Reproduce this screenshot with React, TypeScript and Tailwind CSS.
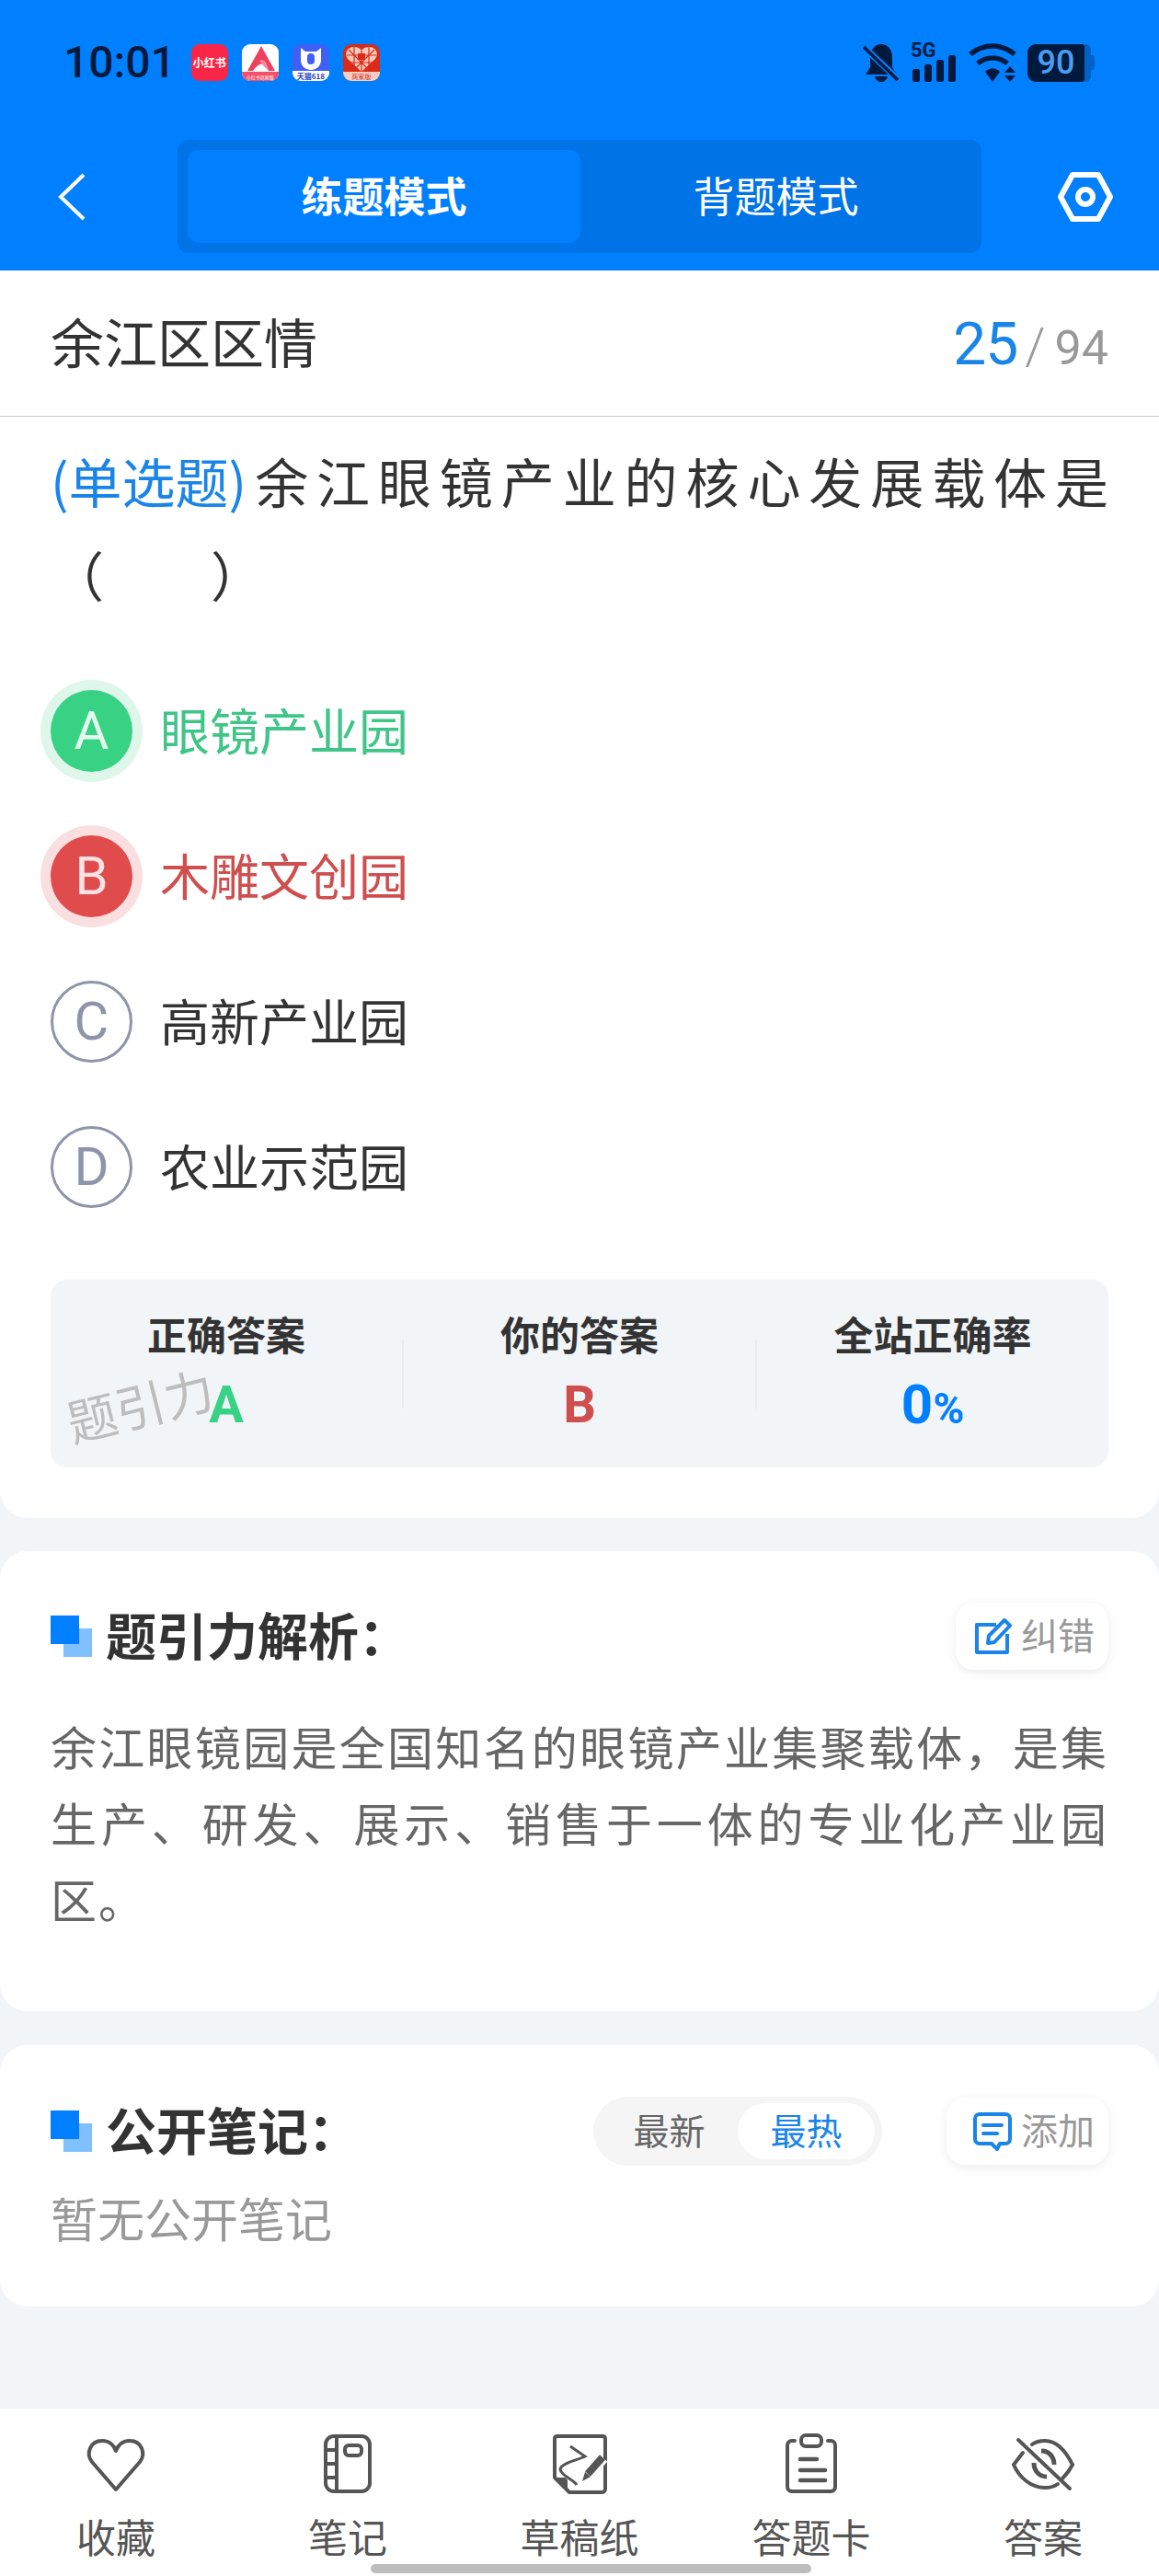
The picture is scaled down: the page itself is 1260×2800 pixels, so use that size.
import type { ReactNode } from "react";

const cjk = "font-['Noto_Sans_CJK_SC','Noto_Sans',sans-serif]";

function AppIcons() {
  return (
    <div className="ml-[17px] flex gap-[15px]">
      <div className="flex h-[40px] w-[40px] items-center justify-center rounded-[9px] bg-[#fb2647] text-[12px] font-bold text-white">
        小红书
      </div>
      <div className="flex h-[40px] w-[40px] flex-col overflow-hidden rounded-[9px] bg-white">
        <svg viewBox="0 0 40 30" className="h-[30px] w-[40px]">
          <path d="M21 2 L36 29 H29 C25 19 19 19 12 29 H6 Z" fill="#f0405f" />
          <path d="M19 18 C23 16 27 18 29 29 L22 22 Z" fill="#f98a9c" />
        </svg>
        <div className="flex h-[10px] items-center justify-center bg-[#f4506c] text-[5px] leading-none text-white">小红书商家版</div>
      </div>
      <div className="flex h-[40px] w-[40px] flex-col overflow-hidden rounded-[9px] bg-[#3f5ff5]">
        <svg viewBox="0 0 40 29" className="h-[29px] w-[40px]">
          <path d="M9 4 L14 8 H26 L31 4 V17 C31 24 26 28 20 28 C14 28 9 24 9 17 Z" fill="#fff" />
          <rect x="16" y="10" width="8" height="12" rx="4" fill="#3f5ff5" />
        </svg>
        <div className="flex h-[11px] items-center justify-center bg-white text-[8px] font-bold leading-none text-[#2b3fc0]">天猫618</div>
      </div>
      <div className="flex h-[40px] w-[40px] flex-col overflow-hidden rounded-[9px] bg-[#d92b17]">
        <svg viewBox="0 0 40 30" className="h-[30px] w-[40px]">
          <path d="M20 30 L5 16 C1 10 4 3 12 3 C16 3 19 5 20 7 C21 5 24 3 28 3 C36 3 39 10 35 16 Z" fill="#f7c9bb" />
          <path d="M20 7 V30 M4 12 H36 M6 20 H34 M12 3 V24 M28 3 V24 M6 6 L28 28 M34 6 L12 28" stroke="#d92b17" strokeWidth="1.2" />
          <rect x="16" y="10" width="8" height="7" fill="#d92b17" />
        </svg>
        <div className="flex h-[10px] items-center justify-center bg-[#f9cdc2] text-[7px] leading-none text-[#c9301c]">商家版</div>
      </div>
    </div>
  );
}

function StatusIcons() {
  return (
    <div className="flex items-center">
      <svg viewBox="0 0 40 42" className="h-[42px] w-[40px]">
        <path d="M20 1 C28 1 32 8 32 16 V26 L37 34 H3 L8 26 V16 C8 8 12 1 20 1 Z" fill="#001a3d" />
        <path d="M13 36 H27 C26 40 23 42 20 42 C17 42 14 40 13 36 Z" fill="#001a3d" />
        <path d="M2 5 L38 39" stroke="#0080ff" strokeWidth="7" />
        <path d="M1 4 L38 40" stroke="#001a3d" strokeWidth="3.5" />
      </svg>
      <div className="relative ml-[12px] h-[42px] w-[50px]">
        <svg viewBox="0 0 50 42" className="h-[42px] w-[50px]">
          <rect x="2" y="28" width="8" height="14" rx="2.5" fill="#001a3d" />
          <rect x="15" y="23" width="8" height="19" rx="2.5" fill="#001a3d" />
          <rect x="28" y="18" width="8" height="24" rx="2.5" fill="#001a3d" />
          <rect x="41" y="13" width="8" height="29" rx="2.5" fill="#001a3d" />
        </svg>
        <span className="absolute left-0 top-[-3px] font-['Roboto',sans-serif] text-[22px] font-bold leading-[22px] text-[#001a3d]">5G</span>
      </div>
      <svg viewBox="0 0 54 44" className="ml-[12px] h-[44px] w-[54px]">
        <path d="M3 13 C17 1 37 1 51 13" fill="none" stroke="#001a3d" strokeWidth="5.5" />
        <path d="M11 23 C20 15 34 15 43 23" fill="none" stroke="#001a3d" strokeWidth="5.5" />
        <path d="M19 32 C24 27 30 27 35 32 L27 43 Z" fill="#001a3d" />
        <path d="M46 26 L52 33 H40 Z M40 36 H52 L46 43 Z" fill="#001a3d" />
      </svg>
      <div className="ml-[11px] flex items-center">
        <div className="flex h-[41px] w-[62px] items-center justify-center rounded-l-[9px] rounded-r-[3px] bg-[#001a3d] font-['Roboto',sans-serif] text-[36px] font-medium text-[#4a9df0]">
          90
        </div>
        <div className="h-[41px] w-[7px] rounded-r-[6px] bg-[#0062c4]" />
        <div className="h-[16px] w-[4px] rounded-r-[3px] bg-[#0062c4]" />
      </div>
    </div>
  );
}

function Header() {
  return (
    <header className="bg-[#0080ff] pb-[19px]">
      <div className="flex h-[136px] items-center justify-between pl-[69px] pr-[70px]">
        <div className="flex items-center">
          <span className="font-['Roboto',sans-serif] text-[48px] font-medium leading-none text-[#001a3d]">10:01</span>
          <AppIcons />
        </div>
        <StatusIcons />
      </div>
      <div className="mt-[16px] flex h-[123px] items-center">
        <div className="flex w-[193px] pl-[63px]">
          <svg viewBox="0 0 30 52" className="h-[52px] w-[30px]">
            <path d="M28 2 L3 26 L28 50" fill="none" stroke="#fff" strokeWidth="4" />
          </svg>
        </div>
        <div className="flex h-[123px] w-[874px] rounded-[12px] bg-[#0073e6] p-[11px]">
          <div className="flex h-[101px] w-[427px] items-center justify-center rounded-[12px] bg-[#0080ff] pb-[3px] text-[45px] font-bold text-white">
            练题模式
          </div>
          <div className="flex h-[101px] flex-1 items-center justify-center pb-[3px] text-[45px] text-white">背题模式</div>
        </div>
        <div className="flex flex-1 justify-end pr-[50px]">
          <svg viewBox="0 0 60 54" className="h-[54px] w-[60px]">
            <path d="M16 3 H44 L57 27 L44 51 H16 L3 27 Z" fill="none" stroke="#fff" strokeWidth="6" strokeLinejoin="round" />
            <circle cx="30" cy="27" r="8" fill="none" stroke="#fff" strokeWidth="6" />
          </svg>
        </div>
      </div>
    </header>
  );
}

function Option({ letter, text, state }: { letter: string; text: string; state?: "right" | "wrong" }) {
  return (
    <div className="flex h-[158px] items-center pl-[44px]">
      {state === "right" && (
        <div className="flex h-[111px] w-[111px] items-center justify-center rounded-full bg-[#dff7ea]">
          <div className="flex h-[89px] w-[89px] items-center justify-center rounded-full bg-[#37d284] font-['Roboto',sans-serif] text-[58px] text-[#e3f9ee]">{letter}</div>
        </div>
      )}
      {state === "wrong" && (
        <div className="flex h-[111px] w-[111px] items-center justify-center rounded-full bg-[#f9dfdf]">
          <div className="flex h-[89px] w-[89px] items-center justify-center rounded-full bg-[#e04b4b] font-['Roboto',sans-serif] text-[58px] text-[#fce3e3]">{letter}</div>
        </div>
      )}
      {!state && (
        <div className="flex h-[111px] w-[111px] items-center justify-center">
          <div className="flex h-[89px] w-[89px] items-center justify-center rounded-full border-[3px] border-[#8f94ab] font-['Roboto',sans-serif] text-[58px] text-[#8f94ab]">{letter}</div>
        </div>
      )}
      <span
        className={
          "ml-[19px] pb-[2px] text-[54px] leading-none " +
          (state === "right" ? "text-[#3fc588]" : state === "wrong" ? "text-[#cf4f4f]" : "text-[#333333]")
        }
      >
        {text}
      </span>
    </div>
  );
}

function Stats() {
  return (
    <div className="relative mx-[55px] mt-[44px] flex h-[204px] rounded-[18px] bg-[#f2f5f8]">
      <div className="flex flex-1 flex-col items-center pt-[35px]">
        <div className="text-[43px] font-bold leading-[46px] text-[#333333]">正确答案</div>
        <div className="mt-[24px] font-['Roboto',sans-serif] text-[56px] font-bold leading-[62px] text-[#37d284]">A</div>
      </div>
      <div className="mt-[65px] h-[75px] w-[2px] bg-[#e9ebee]" />
      <div className="flex flex-1 flex-col items-center pt-[35px]">
        <div className="text-[43px] font-bold leading-[46px] text-[#333333]">你的答案</div>
        <div className="mt-[24px] font-['Roboto',sans-serif] text-[56px] font-bold leading-[62px] text-[#cf4f4f]">B</div>
      </div>
      <div className="mt-[65px] h-[75px] w-[2px] bg-[#e9ebee]" />
      <div className="flex flex-1 flex-col items-center pt-[35px]">
        <div className="text-[43px] font-bold leading-[46px] text-[#333333]">全站正确率</div>
        <div className="mt-[24px] font-['Roboto',sans-serif] font-bold leading-[62px] text-[#0080ff]">
          <span className="text-[60px]">0</span>
          <span className="text-[46px]">%</span>
        </div>
      </div>
      <div className="absolute left-[16px] top-[108px] rotate-[-14deg] text-[54px] leading-none text-[#bdbdbd]">题引力</div>
    </div>
  );
}

function SectionTitle({ children }: { children: ReactNode }) {
  return (
    <div className="flex items-center">
      <div className="relative h-[45px] w-[45px]">
        <div className="absolute bottom-0 right-0 h-[31px] w-[31px] bg-[#80c0ff]" />
        <div className="absolute left-0 top-0 h-[31px] w-[31px] bg-[#0080ff]" />
      </div>
      <h2 className="ml-[15px] pb-[6px] text-[55px] font-bold leading-none text-[#333333]">{children}</h2>
    </div>
  );
}

function ActionButton({ icon, label, wide }: { icon: ReactNode; label: string; wide?: boolean }) {
  return (
    <div
      className={
        "flex h-[73px] items-center justify-end rounded-[20px] bg-white pr-[15px] shadow-[0_3px_12px_rgba(0,0,0,0.08)] " +
        (wide ? "w-[176px]" : "w-[166px]")
      }
    >
      {icon}
      <span className="ml-[9px] pb-[5px] text-[40px] leading-none text-[#999999]">{label}</span>
    </div>
  );
}

function HeartIcon() {
  return (
    <svg viewBox="0 0 70 70" className="h-[70px] w-[70px]">
      <path d="M35 63 L9 33 C2 24 7 10 20 10 C28 10 33 15 35 21 C37 15 42 10 50 10 C63 10 68 24 61 33 Z" fill="none" stroke="#555555" strokeWidth="4" strokeLinejoin="round" />
    </svg>
  );
}

function NotebookIcon() {
  return (
    <svg viewBox="0 0 70 70" className="h-[70px] w-[70px]">
      <rect x="11" y="5" width="48" height="60" rx="9" fill="none" stroke="#555555" strokeWidth="4" />
      <path d="M23 5 V65 M11 20 H23 M11 35 H23 M11 50 H23" stroke="#555555" strokeWidth="4" />
      <rect x="32" y="15" width="18" height="11" rx="4" fill="none" stroke="#555555" strokeWidth="4" />
    </svg>
  );
}

function DraftIcon() {
  return (
    <svg viewBox="0 0 70 70" className="h-[70px] w-[70px]">
      <path d="M8 50 V8 C8 6 9 5 11 5 H60 C62 5 63 6 63 8 V62 C63 64 62 66 60 66 H24 Z" fill="none" stroke="#555555" strokeWidth="4" strokeLinejoin="round" />
      <path d="M8 50 L18 50 C21 50 22 52 22 55 V64 Z" fill="#555555" />
      <path d="M25 16 L41 27 C33 31 15 34 14 41 C15 48 28 52 32 58" fill="none" stroke="#555555" strokeWidth="3" />
      <path d="M40 50 L60 28" stroke="#ffffff" strokeWidth="14" />
      <path d="M44 46 L60 28" stroke="#555555" strokeWidth="8" />
      <path d="M38 54 L41 44 L47 49 Z" fill="#555555" />
    </svg>
  );
}

function ClipboardIcon() {
  return (
    <svg viewBox="0 0 70 70" className="h-[70px] w-[70px]">
      <path d="M17 10 H14 C11 10 9 12 9 15 V60 C9 63 11 65 14 65 H56 C59 65 61 63 61 60 V15 C61 12 59 10 56 10 H53" fill="none" stroke="#555555" strokeWidth="4" strokeLinecap="round" />
      <rect x="24" y="4" width="22" height="12" rx="5" fill="none" stroke="#555555" strokeWidth="4" />
      <path d="M23 30 H41 M23 42 H50 M23 53 H50" stroke="#555555" strokeWidth="4.5" strokeLinecap="round" />
    </svg>
  );
}

function EyeOffIcon() {
  return (
    <svg viewBox="0 0 70 70" className="h-[70px] w-[70px]">
      <path d="M13 23 L3 36 C9 50 22 61 37 61 C43 61 47 60 51 57 M23 14 C27 11 32 10 37 10 C50 10 60 22 67 36 C64 42 60 47 56 51" fill="none" stroke="#555555" strokeWidth="4" strokeLinecap="round" />
      <path d="M33 21 C42 21 47 28 47 36 M25 34 C25 43 31 49 39 49" fill="none" stroke="#555555" strokeWidth="5" />
      <path d="M8 9 L64 62" stroke="#555555" strokeWidth="4" strokeLinecap="round" />
    </svg>
  );
}

const tabs = [
  { label: "收藏", icon: <HeartIcon /> },
  { label: "笔记", icon: <NotebookIcon /> },
  { label: "草稿纸", icon: <DraftIcon /> },
  { label: "答题卡", icon: <ClipboardIcon /> },
  { label: "答案", icon: <EyeOffIcon /> },
];

export default function App() {
  return (
    <div className={"relative flex h-[2800px] w-[1260px] flex-col overflow-hidden bg-[#f2f5f8] " + cjk}>
      <Header />

      <section className="rounded-b-[30px] bg-white pb-[55px]">
        <div className="flex h-[159px] items-center justify-between border-b border-[#cccccc] px-[55px]">
          <h1 className="pb-[6px] text-[58px] font-normal leading-none text-[#333333]">余江区区情</h1>
          <div className="flex items-baseline pt-[4px] font-['Roboto',sans-serif]">
            <span className="text-[64px] leading-none tracking-[-1px] text-[#1a85e8]">25</span>
            <span className="ml-[8px] text-[56px] font-light leading-none text-[#999999]">/</span>
            <span className="ml-[10px] text-[52px] leading-none text-[#999999]">94</span>
          </div>
        </div>
        <p className="px-[55px] pt-[18px] text-justify text-[58px] leading-[102px] text-[#333333]">
          <span className="inline-block text-[#1a85e8]">(单选题)</span>余江眼镜产业的核心发展载体是（　　）
        </p>
        <div className="mt-[40px]">
          <Option letter="A" text="眼镜产业园" state="right" />
          <Option letter="B" text="木雕文创园" state="wrong" />
          <Option letter="C" text="高新产业园" />
          <Option letter="D" text="农业示范园" />
        </div>
        <Stats />
      </section>

      <section className="mt-[36px] rounded-[30px] bg-white px-[55px] pb-[81px] pt-[56px]">
        <div className="flex items-center justify-between">
          <SectionTitle>题引力解析：</SectionTitle>
          <ActionButton
            label="纠错"
            icon={
              <svg viewBox="0 0 42 42" className="h-[42px] w-[42px]">
                <path d="M24 8 H3 V38 H36 V18" fill="none" stroke="#1a85e8" strokeWidth="4" strokeLinejoin="round" />
                <path d="M15 28 L16 20 L33 3 L39 9 L22 27 Z" fill="none" stroke="#1a85e8" strokeWidth="4" strokeLinejoin="round" />
              </svg>
            }
          />
        </div>
        <p className="mt-[41px] text-justify text-[50px] leading-[83px] tracking-[2px] text-[#666666]">
          余江眼镜园是全国知名的眼镜产业集聚载体，是集生产、研发、展示、销售于一体的专业化产业园区。
        </p>
      </section>

      <section className="mt-[37px] rounded-[30px] bg-white px-[55px] pb-[67px] pt-[56px]">
        <div className="flex h-[75px] items-center">
          <SectionTitle>公开笔记：</SectionTitle>
          <div className="ml-auto flex h-[75px] w-[314px] items-center rounded-full bg-[#f5f5f5] pl-[8px] pr-[8px] text-[39px]">
            <div className="flex-1 pb-[5px] text-center leading-none text-[#666666]">最新</div>
            <div className="flex h-[61px] w-[149px] items-center justify-center rounded-full bg-white pb-[5px] leading-none text-[#1a85e8]">最热</div>
          </div>
          <div className="ml-[70px]">
            <ActionButton
              wide
              label="添加"
              icon={
                <svg viewBox="0 0 44 44" className="h-[44px] w-[44px]">
                  <path d="M8 3 H36 C39 3 41 5 41 8 V30 C41 33 39 35 36 35 H30 L27 41 L21 35 H8 C5 35 3 33 3 30 V8 C3 5 5 3 8 3 Z" fill="none" stroke="#1a85e8" strokeWidth="4" strokeLinejoin="round" />
                  <path d="M12 15 H32 M12 24 H27" stroke="#1a85e8" strokeWidth="4" strokeLinecap="round" />
                </svg>
              }
            />
          </div>
        </div>
        <p className="mt-[26px] text-[51px] leading-[60px] text-[#999999]">暂无公开笔记</p>
      </section>

      <nav className="mt-auto flex h-[182px] bg-white pt-[25px]">
        {tabs.map((tab) => (
          <div key={tab.label} className="flex w-[252px] flex-col items-center">
            {tab.icon}
            <span className="mt-[18px] text-[43px] leading-[50px] text-[#555555]">{tab.label}</span>
          </div>
        ))}
      </nav>
      <div className="absolute bottom-[3px] left-[403px] h-[10px] w-[479px] rounded-full bg-[#bdbdbd]" />
    </div>
  );
}
